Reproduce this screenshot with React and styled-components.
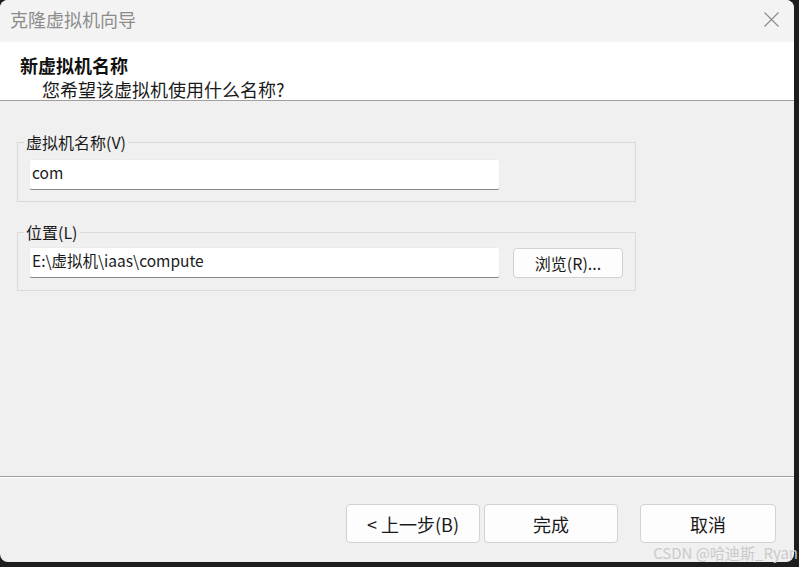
import React from "react";
import styled, { createGlobalStyle } from "styled-components";

const Global = createGlobalStyle`
  html, body {
    margin: 0;
    padding: 0;
    background: #1d1d1d;
  }
  * { box-sizing: border-box; }
`;

const FONT = `"Noto Sans CJK SC", "Noto Sans", sans-serif`;

const Stage = styled.div`
  position: relative;
  width: 799px;
  height: 567px;
  font-family: ${FONT};
`;

const Dialog = styled.div`
  width: 794px;
  height: 562px;
  border-radius: 8px;
  overflow: hidden;
  background: #f0f0f0;
  display: flex;
  flex-direction: column;
`;

const TitleBar = styled.div`
  height: 42px;
  flex: none;
  background: #f3f3f3;
  display: flex;
  align-items: flex-start;
  justify-content: space-between;
  padding: 8px 15px 0 10px;
`;

const Title = styled.div`
  font-size: 18px;
  line-height: 22px;
  color: #8c8c8c;
`;

const CloseButton = styled.button`
  border: 0;
  padding: 0;
  margin-top: 4px;
  background: transparent;
  width: 15px;
  height: 15px;
  display: flex;
`;

const Header = styled.div`
  height: 59px;
  flex: none;
  background: #ffffff;
  border-bottom: 1px solid #a0a0a0;
  padding: 12px 0 0 20px;
`;

const Heading = styled.div`
  font-size: 18px;
  line-height: 22px;
  font-weight: 700;
  color: #111;
`;

const SubHeading = styled.div`
  font-size: 18px;
  line-height: 22px;
  margin-top: 2px;
  padding-left: 22px;
  color: #1a1a1a;
`;

const Content = styled.div`
  flex: 1;
  padding: 31px 0 0 17px;
  display: flex;
  flex-direction: column;
  gap: 20px;
`;

const Group = styled.fieldset`
  width: 619px;
  margin: 0;
  border: 1px solid #dadada;
  padding: ${(p) => p.$top}px 12px ${(p) => p.$bottom}px 11px;
  min-width: 0;
`;

const Legend = styled.legend`
  font-size: 16px;
  line-height: 20px;
  padding: 0 2px;
  margin-left: -5px;
  color: #1a1a1a;
`;

const Row = styled.div`
  display: flex;
  align-items: center;
  gap: 13px;
`;

const TextInput = styled.input`
  width: 471px;
  height: 31px;
  flex: none;
  font-family: ${FONT};
  font-size: 15.5px;
  color: #1a1a1a;
  background: #ffffff;
  border: 1px solid #ececec;
  border-bottom: 1px solid #8a8a8a;
  border-radius: 3px;
  padding: 0 2px 5px 2px;
  outline: none;
`;

const Button = styled.button`
  width: ${(p) => p.$w}px;
  height: ${(p) => p.$h}px;
  margin-left: ${(p) => p.$ml || 0}px;
  font-family: ${FONT};
  font-size: ${(p) => p.$fs}px;
  color: #1a1a1a;
  background: #fdfdfd;
  border: 1px solid #d2d2d2;
  border-radius: 4px;
  padding: 0;
  display: flex;
  align-items: center;
  justify-content: center;
`;

const Footer = styled.div`
  height: 86px;
  flex: none;
  border-top: 1px solid #a0a0a0;
  box-shadow: inset 0 1px 0 #ffffff;
  display: flex;
  justify-content: flex-end;
  align-items: flex-start;
  padding: 27px 18px 0 0;
`;

const Watermark = styled.div`
  position: absolute;
  right: 1px;
  bottom: 4px;
  font-size: 15px;
  line-height: 20px;
  color: #cacaca;
  white-space: nowrap;
`;

export default function App() {
  return (
    <Stage>
      <Global />
      <Dialog>
        <TitleBar>
          <Title>克隆虚拟机向导</Title>
          <CloseButton aria-label="关闭">
            <svg width="15" height="15" viewBox="0 0 15 15">
              <path d="M0.5 0.5 L14.5 14.5 M14.5 0.5 L0.5 14.5" stroke="#8a8a8a" strokeWidth="1.1" fill="none" />
            </svg>
          </CloseButton>
        </TitleBar>
        <Header>
          <Heading>新虚拟机名称</Heading>
          <SubHeading>您希望该虚拟机使用什么名称?</SubHeading>
        </Header>
        <Content>
          <Group $top={7} $bottom={11}>
            <Legend>虚拟机名称(V)</Legend>
            <TextInput defaultValue="com" />
          </Group>
          <Group $top={5} $bottom={12}>
            <Legend>位置(L)</Legend>
            <Row>
              <TextInput defaultValue="E:\虚拟机\iaas\compute" />
              <Button $w={110} $h={30} $fs={16}>浏览(R)...</Button>
            </Row>
          </Group>
        </Content>
        <Footer>
          <Button $w={134} $h={39} $fs={18}>&lt; 上一步(B)</Button>
          <Button $w={134} $h={39} $fs={18} $ml={4}>完成</Button>
          <Button $w={136} $h={39} $fs={18} $ml={22}>取消</Button>
        </Footer>
      </Dialog>
      <Watermark>CSDN @哈迪斯_Ryan</Watermark>
    </Stage>
  );
}
